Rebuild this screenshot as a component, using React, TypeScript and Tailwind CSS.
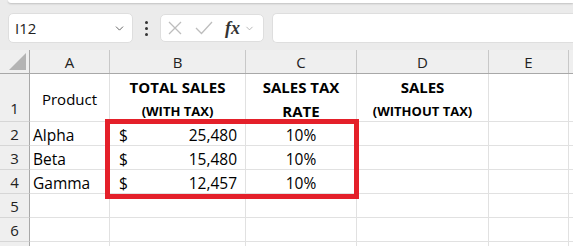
import { ChevronDown } from "lucide-react"

const cols = [
  { key: "A", w: "w-[80px]" },
  { key: "B", w: "w-[136px]" },
  { key: "C", w: "w-[111px]" },
  { key: "D", w: "w-[132px]" },
  { key: "E", w: "w-[80px]" },
]

const rows = [
  { name: "Alpha", total: "25,480", rate: "10%" },
  { name: "Beta", total: "15,480", rate: "10%" },
  { name: "Gamma", total: "12,457", rate: "10%" },
]

function RowHead({ n, tall }: { n?: number; tall?: boolean }) {
  return (
    <div
      className={`w-[30px] shrink-0 bg-[#efefef] border-r border-r-[#a8a8a8] border-b border-b-[#d6d6d6] flex justify-center text-[15px] text-[#222] ${
        tall ? "h-[48px] items-end pb-[2px]" : "h-[24px] items-center pt-[2px]"
      }`}
    >
      {n}
    </div>
  )
}

export default function App() {
  return (
    <div className="relative w-[573px] h-[246px] overflow-hidden bg-[#ebebeb] font-['Open_Sans',sans-serif] text-black">
      {/* ribbon bottom edge */}
      <div className="ml-[8px] h-[3px] bg-white rounded-bl-[6px] shadow-[0_1px_2px_rgba(0,0,0,0.18)]" />

      {/* formula bar row */}
      <div className="flex items-center mt-[10px] h-[30px]">
        <div className="ml-[8px] w-[125px] h-[30px] bg-white rounded-[5px] border border-[#dedede] flex items-center pl-[6px] pr-[6px]">
          <span className="text-[15px] text-[#222] flex-1">I12</span>
          <ChevronDown className="w-[13px] h-[13px] text-[#444]" strokeWidth={1.5} />
        </div>
        <div className="w-[27px] flex flex-col items-center gap-[3px]">
          <span className="w-[3px] h-[3px] bg-[#333] rounded-full" />
          <span className="w-[3px] h-[3px] bg-[#333] rounded-full" />
          <span className="w-[3px] h-[3px] bg-[#333] rounded-full" />
        </div>
        <div className="w-[104px] h-[28px] bg-white rounded-[5px] border border-[#dedede] flex items-center pl-[6px]">
          <svg width="16" height="16" viewBox="0 0 16 16" className="mr-[12px]">
            <path d="M2 2 L14 14 M14 2 L2 14" stroke="#bdbdbd" strokeWidth="1.3" fill="none" />
          </svg>
          <svg width="18" height="16" viewBox="0 0 18 16" className="mr-[12px]">
            <path d="M1 8 L6.5 13.5 L17 2" stroke="#bdbdbd" strokeWidth="1.3" fill="none" />
          </svg>
          <span className="font-['Liberation_Serif',serif] italic font-bold text-[18px] leading-none text-[#333] mr-[4px]">
            fx
          </span>
          <ChevronDown className="w-[11px] h-[11px] text-[#999]" strokeWidth={1.5} />
        </div>
        <div className="ml-[8px] flex-1 h-[30px] bg-white rounded-l-[5px] border border-r-0 border-[#dedede]" />
      </div>

      {/* grid */}
      <div className="mt-[7px]">
        {/* column headers */}
        <div className="flex h-[24px] bg-[#efefef] border-b border-b-[#a8a8a8]">
          <div className="w-[30px] shrink-0 border-r border-r-[#a8a8a8] relative">
            <svg width="18" height="18" viewBox="0 0 18 18" className="absolute left-[9px] top-[3px]">
              <path d="M17 0 L17 17 L0 17 Z" fill="#b4b4b4" />
            </svg>
          </div>
          {cols.map((c) => (
            <div
              key={c.key}
              className={`${c.w} shrink-0 border-r border-r-[#c8c8c8] flex items-center justify-center pt-[1px] text-[15px] text-[#222]`}
            >
              {c.key}
            </div>
          ))}
          <div className="flex-1" />
        </div>

        {/* row 1 */}
        <div className="flex bg-white">
          <RowHead n={1} tall />
          <div className="w-[80px] h-[48px] shrink-0 border-r border-b border-[#e1e1e1] flex items-center justify-center pt-[3px] text-[15px]">
            Product
          </div>
          <div className="w-[136px] h-[48px] shrink-0 border-r border-b border-[#e1e1e1] flex flex-col items-center pt-[1px] font-bold">
            <span className="text-[15px] leading-[24px]">TOTAL SALES</span>
            <span className="text-[13px] leading-[24px]">(WITH TAX)</span>
          </div>
          <div className="w-[111px] h-[48px] shrink-0 border-r border-b border-[#e1e1e1] flex flex-col items-center pt-[1px] font-bold">
            <span className="text-[15px] leading-[24px]">SALES TAX</span>
            <span className="text-[15px] leading-[24px]">RATE</span>
          </div>
          <div className="w-[132px] h-[48px] shrink-0 border-r border-b border-[#e1e1e1] flex flex-col items-center pt-[1px] font-bold">
            <span className="text-[15px] leading-[24px]">SALES</span>
            <span className="text-[13px] leading-[24px]">(WITHOUT TAX)</span>
          </div>
          <div className="w-[80px] h-[48px] shrink-0 border-r border-b border-[#e1e1e1]" />
          <div className="flex-1 h-[48px] border-b border-[#e1e1e1]" />
        </div>

        {/* data rows */}
        {rows.map((r, i) => (
          <div key={r.name} className="flex bg-white">
            <RowHead n={i + 2} />
            <div className="w-[80px] h-[24px] shrink-0 border-r border-b border-[#e1e1e1] pl-[3px] pt-[2px] text-[15.5px] leading-[22px]">
              {r.name}
            </div>
            <div className="w-[136px] h-[24px] shrink-0 border-r border-b border-[#e1e1e1] pl-[9px] pr-[8px] pt-[2px] flex justify-between text-[15.5px] leading-[22px]">
              <span>$</span>
              <span>{r.total}</span>
            </div>
            <div className="w-[111px] h-[24px] shrink-0 border-r border-b border-[#e1e1e1] text-center pt-[2px] text-[15.5px] leading-[22px]">
              {r.rate}
            </div>
            <div className="w-[132px] h-[24px] shrink-0 border-r border-b border-[#e1e1e1]" />
            <div className="w-[80px] h-[24px] shrink-0 border-r border-b border-[#e1e1e1]" />
            <div className="flex-1 h-[24px] border-b border-[#e1e1e1]" />
          </div>
        ))}

        {[5, 6, 0].map((n) => (
          <div key={n} className="flex bg-white">
            <RowHead n={n || undefined} />
            {cols.map((c) => (
              <div key={c.key} className={`${c.w} h-[24px] shrink-0 border-r border-b border-[#e1e1e1]`} />
            ))}
            <div className="flex-1 h-[24px] border-b border-[#e1e1e1]" />
          </div>
        ))}
      </div>

      {/* red highlight */}
      <div className="absolute left-[105px] top-[119px] w-[254px] h-[80px] border-[5px] border-[#e4202a] pointer-events-none" />
    </div>
  )
}
